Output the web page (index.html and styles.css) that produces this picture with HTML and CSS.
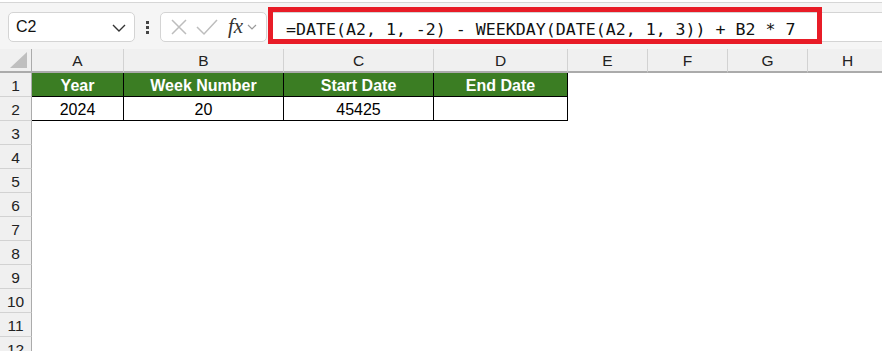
FILE: index.html
```html
<!DOCTYPE html>
<html lang="en">
<head>
  <meta charset="UTF-8" />
  <title>Week Start Date</title>
  <link rel="stylesheet" href="styles.css">
</head>
<body>
  <div class="topstrip"></div>
  <div class="formula-bar">
    <div class="name-box">
      <span>C2</span>
      <svg class="chev" width="14" height="8" viewBox="0 0 14 8"><path d="M1 1 L7 7 L13 1" fill="none" stroke="#333" stroke-width="1.4"/></svg>
    </div>
    <div class="dots"><i></i><i></i><i></i></div>
    <div class="fx-box">
      <svg width="18" height="18" viewBox="0 0 18 18"><path d="M2 2 L16 16 M16 2 L2 16" stroke="#bdbdbd" stroke-width="1.5" fill="none"/></svg>
      <svg width="22" height="18" viewBox="0 0 22 18"><path d="M1 9 L8 16 L21 2" stroke="#bdbdbd" stroke-width="1.5" fill="none"/></svg>
      <span class="fx">fx</span>
      <svg class="chev-sm" width="10" height="6" viewBox="0 0 10 6"><path d="M1 1 L5 5 L9 1" fill="none" stroke="#999" stroke-width="1.2"/></svg>
    </div>
    <div class="formula-input">
      <span class="formula">=DATE(A2, 1, -2) - WEEKDAY(DATE(A2, 1, 3)) + B2 * 7</span>
      <div class="highlight"></div>
    </div>
  </div>

  <div class="sheet">
    <div class="ch corner"><svg width="18" height="16" viewBox="0 0 18 16"><polygon points="17,0 17,16 0,16" fill="#bfbfbf"/></svg></div>
    <div class="ch">A</div><div class="ch">B</div><div class="ch">C</div><div class="ch">D</div>
    <div class="ch">E</div><div class="ch">F</div><div class="ch">G</div><div class="ch">H</div>

    <div class="rh">1</div>
    <div class="c th">Year</div><div class="c th">Week Number</div><div class="c th">Start Date</div><div class="c th">End Date</div>
    <div class="c"></div><div class="c"></div><div class="c"></div><div class="c"></div>

    <div class="rh">2</div>
    <div class="c td">2024</div><div class="c td">20</div><div class="c td">45425</div><div class="c td"></div>
    <div class="c"></div><div class="c"></div><div class="c"></div><div class="c"></div>

    <div class="rh">3</div><div class="c"></div><div class="c"></div><div class="c"></div><div class="c"></div><div class="c"></div><div class="c"></div><div class="c"></div><div class="c"></div>
    <div class="rh">4</div><div class="c"></div><div class="c"></div><div class="c"></div><div class="c"></div><div class="c"></div><div class="c"></div><div class="c"></div><div class="c"></div>
    <div class="rh">5</div><div class="c"></div><div class="c"></div><div class="c"></div><div class="c"></div><div class="c"></div><div class="c"></div><div class="c"></div><div class="c"></div>
    <div class="rh">6</div><div class="c"></div><div class="c"></div><div class="c"></div><div class="c"></div><div class="c"></div><div class="c"></div><div class="c"></div><div class="c"></div>
    <div class="rh">7</div><div class="c"></div><div class="c"></div><div class="c"></div><div class="c"></div><div class="c"></div><div class="c"></div><div class="c"></div><div class="c"></div>
    <div class="rh">8</div><div class="c"></div><div class="c"></div><div class="c"></div><div class="c"></div><div class="c"></div><div class="c"></div><div class="c"></div><div class="c"></div>
    <div class="rh">9</div><div class="c"></div><div class="c"></div><div class="c"></div><div class="c"></div><div class="c"></div><div class="c"></div><div class="c"></div><div class="c"></div>
    <div class="rh">10</div><div class="c"></div><div class="c"></div><div class="c"></div><div class="c"></div><div class="c"></div><div class="c"></div><div class="c"></div><div class="c"></div>
    <div class="rh">11</div><div class="c"></div><div class="c"></div><div class="c"></div><div class="c"></div><div class="c"></div><div class="c"></div><div class="c"></div><div class="c"></div>
    <div class="rh">12</div><div class="c"></div><div class="c"></div><div class="c"></div><div class="c"></div><div class="c"></div><div class="c"></div><div class="c"></div><div class="c"></div>
  </div>
</body>
</html>
```

FILE: styles.css
```css
html, body {
  margin: 0;
  padding: 0;
  background: #fff;
  font-family: "Liberation Sans", Arial, sans-serif;
  color: #222;
  overflow: hidden;
}

.topstrip {
  height: 2px;
  background: #fff;
  border-bottom: 1px solid #d6d6d6;
}

.formula-bar {
  height: 46px;
  background: #f5f5f5;
  display: flex;
  align-items: flex-start;
  padding-left: 8px;
  box-sizing: border-box;
  padding-top: 9px;
}

.name-box {
  width: 127px;
  height: 30px;
  box-sizing: border-box;
  background: #fff;
  border: 1px solid #d4d4d4;
  border-radius: 5px;
  display: flex;
  align-items: center;
  justify-content: space-between;
  padding: 0 8px 0 7px;
  font-size: 16px;
  color: #111;
}

.name-box .chev {
  margin-top: 2px;
}

.dots {
  width: 25px;
  height: 30px;
  display: flex;
  flex-direction: column;
  align-items: center;
  justify-content: center;
  gap: 2px;
}

.dots i {
  display: block;
  width: 3px;
  height: 3px;
  background: #444;
}

.fx-box {
  width: 107px;
  height: 30px;
  box-sizing: border-box;
  background: #fff;
  border: 1px solid #d4d4d4;
  border-radius: 5px;
  display: flex;
  align-items: center;
  padding-left: 9px;
  gap: 8px;
}

.fx-box .fx {
  font-family: "Liberation Serif", "Times New Roman", serif;
  font-style: italic;
  font-size: 21px;
  color: #333;
  margin-left: 2px;
  margin-top: -2px;
}

.fx-box .chev-sm {
  margin-left: -4px;
}

.formula-input {
  position: relative;
  flex: 1;
  height: 30px;
  margin-left: 1px;
  box-sizing: border-box;
  background: #fff;
  border: 1px solid #d4d4d4;
  border-right: none;
  border-radius: 5px 0 0 5px;
  padding-left: 17px;
  display: flex;
  align-items: center;
}

.formula {
  font-family: "DejaVu Sans Mono", "Liberation Mono", monospace;
  font-size: 16.6px;
  color: #111;
  margin-top: 4px;
  white-space: pre;
}

.highlight {
  position: absolute;
  left: -1px;
  top: -6px;
  width: 554px;
  height: 37px;
  box-sizing: border-box;
  border: 5px solid #e81c27;
}

.sheet {
  display: grid;
  grid-template-columns: 32px 92px 160px 150px 134px 80px 80px 80px 80px;
  grid-auto-rows: 24px;
  width: 888px;
}

.ch {
  background: #f0f0f0;
  border-right: 1px solid #d2d2d2;
  border-bottom: 2px solid #ababab;
  box-sizing: border-box;
  display: flex;
  align-items: center;
  justify-content: center;
  font-size: 15.5px;
  color: #222;
  padding-top: 2px;
}

.ch.corner {
  border-right: 1px solid #ababab;
  justify-content: flex-end;
  align-items: flex-end;
  padding: 0 3px 3px 0;
}

.rh {
  background: #f0f0f0;
  border-right: 1px solid #ababab;
  border-bottom: 1px solid #d2d2d2;
  box-sizing: border-box;
  display: flex;
  align-items: center;
  justify-content: center;
  font-size: 15.5px;
  color: #222;
  padding-top: 2px;
}

.c {
  box-sizing: border-box;
  display: flex;
  align-items: center;
  justify-content: center;
  font-size: 16px;
  color: #000;
  padding-top: 2px;
}

.th {
  background: #3b7d23;
  color: #fff;
  font-weight: bold;
  border-right: 1px solid #000;
  border-bottom: 1px solid #000;
}

.td {
  border-right: 1px solid #000;
  border-bottom: 1px solid #000;
}
```
